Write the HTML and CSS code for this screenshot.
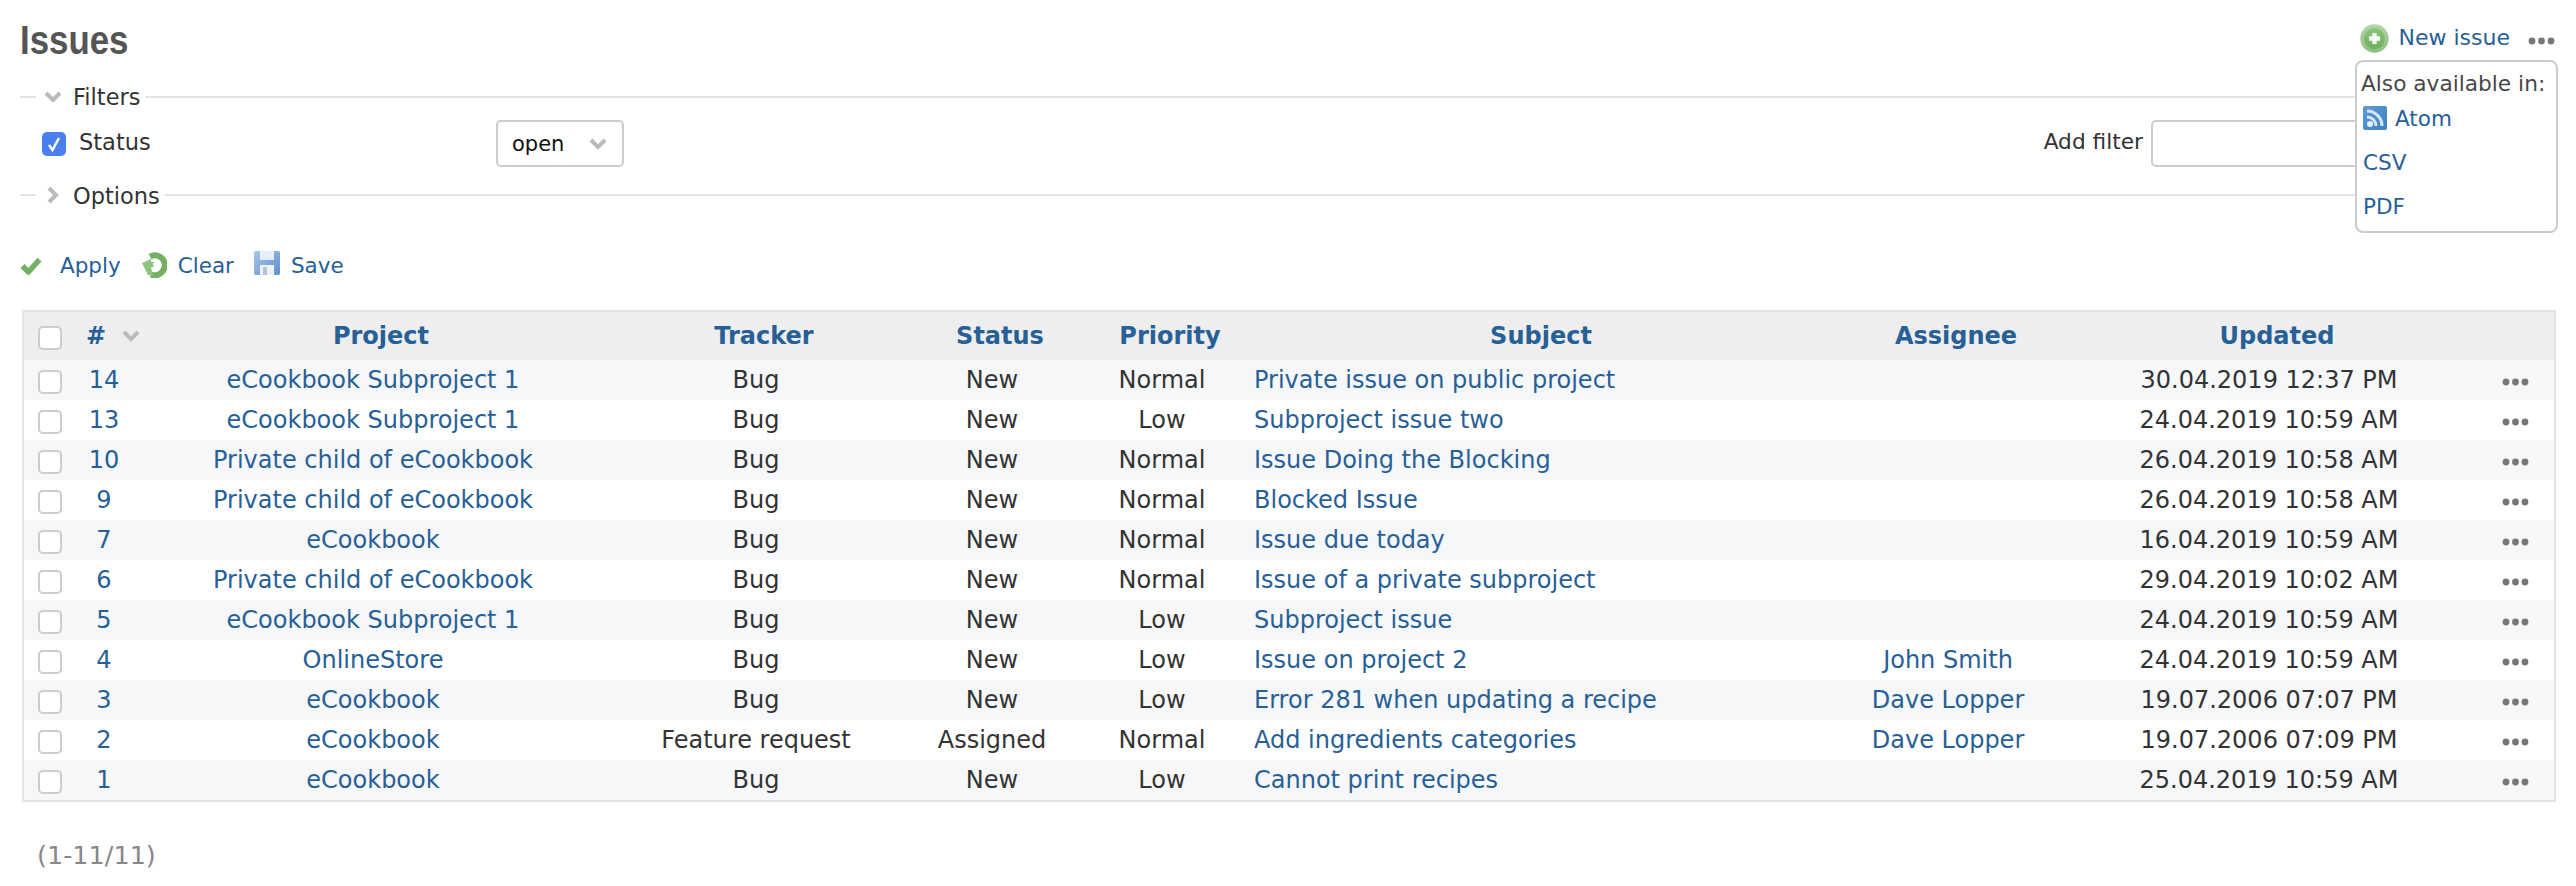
FILE: index.html
```html
<!DOCTYPE html>
<html lang="en">
<head>
<meta charset="utf-8">
<title>Issues</title>
<link rel="stylesheet" href="styles.css">
</head>
<body>
<div class="content">
  <div class="title-row">
    <h2 class="title">Issues</h2>
    <div class="contextual">
      <a class="link new-issue" href="#">
        <svg class="ic-new" viewBox="0 0 29 29"><defs><linearGradient id="gn" x1="0" y1="0" x2="0" y2="1"><stop offset="0" stop-color="#b4d6a8"/><stop offset="1" stop-color="#8dbd7e"/></linearGradient><linearGradient id="gi" x1="0" y1="0" x2="0" y2="1"><stop offset="0" stop-color="#8cc47c"/><stop offset="1" stop-color="#6fae5e"/></linearGradient></defs><circle cx="14.5" cy="14.5" r="14.2" fill="url(#gn)"/><circle cx="14.5" cy="14.5" r="10.5" fill="url(#gi)"/><path d="M14.5 9v11M9 14.5h11" stroke="#f4faf1" stroke-width="4.4"/></svg>
        New issue
      </a>
      <svg class="dots" viewBox="0 0 27 8"><circle cx="4" cy="4" r="3.4"/><circle cx="13.5" cy="4" r="3.4"/><circle cx="23" cy="4" r="3.4"/></svg>
    </div>
  </div>

  <div class="legend">
    <span class="dash"></span>
    <svg class="chev" viewBox="0 0 18 12"><path d="M2 2l7 7 7-7"/></svg>
    <span class="legend-text">Filters</span>
    <span class="rule"></span>
  </div>
  <div class="filter-row">
    <span class="cb-on"><svg viewBox="0 0 24 24"><path d="M7 13l3.5 5L17 6"/></svg></span>
    <span class="status-label">Status</span>
    <div class="select"><span>open</span><svg class="chev" viewBox="0 0 18 12"><path d="M2 2l7 7 7-7"/></svg></div>
    <span class="add-label">Add filter</span>
    <div class="add-input"></div>
  </div>
  <div class="legend options">
    <span class="dash"></span>
    <svg class="chev-right" viewBox="0 0 12 18"><path d="M2 2l7 7-7 7"/></svg>
    <span class="legend-text">Options</span>
    <span class="rule"></span>
  </div>

  <div class="buttons">
    <a class="link btn" href="#"><svg class="ic-apply" viewBox="0 0 22 19"><path d="M2.5 10l6 6L19.5 3.5" fill="none" stroke="#74b064" stroke-width="5.5" stroke-linejoin="round"/></svg>Apply</a>
    <a class="link btn" href="#"><svg class="ic-clear" viewBox="0 0 26 26"><path d="M9 4.5a10 10 0 1 1 1 18" fill="none" stroke="#74b064" stroke-width="6"/><path d="M1 11l9-4v3h6v5h-6l2 9-5-1z" fill="#8ec480"/><circle cx="14.500" cy="12.500" r="2.500" fill="#fff"/></svg>Clear</a>
    <a class="link btn" href="#"><svg class="ic-save" viewBox="0 0 26 24"><defs><linearGradient id="gs" x1="0" y1="0" x2="1" y2="1"><stop offset="0" stop-color="#a8c6e8"/><stop offset="1" stop-color="#5e8fcb"/></linearGradient></defs><rect width="26" height="24" rx="2" fill="url(#gs)"/><rect x="6" y="0" width="14" height="9" fill="#e6eef8"/><rect x="6" y="14" width="14" height="10" fill="#eef0f2"/><rect x="9" y="16" width="4" height="8" fill="#b5c3d3"/></svg>Save</a>
  </div>

  <table class="issues">
    <thead>
      <tr>
        <th class="c-check"><span class="cb"></span></th>
        <th class="c-id"><a class="link" href="#">#</a><svg class="chev sort" viewBox="0 0 18 12"><path d="M2 2l7 7 7-7"/></svg></th>
        <th class="c-project"><a class="link" href="#">Project</a></th>
        <th class="c-tracker"><a class="link" href="#">Tracker</a></th>
        <th class="c-status"><a class="link" href="#">Status</a></th>
        <th class="c-priority"><a class="link" href="#">Priority</a></th>
        <th class="c-subject"><a class="link" href="#">Subject</a></th>
        <th class="c-assignee"><a class="link" href="#">Assignee</a></th>
        <th class="c-updated"><a class="link" href="#">Updated</a></th>
        <th class="c-more"></th>
      </tr>
    </thead>
    <tbody>
      <tr><td><span class="cb"></span></td><td><a class="link" href="#">14</a></td><td><a class="link" href="#">eCookbook Subproject 1</a></td><td>Bug</td><td>New</td><td>Normal</td><td class="subject"><a class="link" href="#">Private issue on public project</a></td><td></td><td>30.04.2019 12:37 PM</td><td><svg class="dots" viewBox="0 0 27 8"><circle cx="4" cy="4" r="3.4"/><circle cx="13.5" cy="4" r="3.4"/><circle cx="23" cy="4" r="3.4"/></svg></td></tr>
      <tr><td><span class="cb"></span></td><td><a class="link" href="#">13</a></td><td><a class="link" href="#">eCookbook Subproject 1</a></td><td>Bug</td><td>New</td><td>Low</td><td class="subject"><a class="link" href="#">Subproject issue two</a></td><td></td><td>24.04.2019 10:59 AM</td><td><svg class="dots" viewBox="0 0 27 8"><circle cx="4" cy="4" r="3.4"/><circle cx="13.5" cy="4" r="3.4"/><circle cx="23" cy="4" r="3.4"/></svg></td></tr>
      <tr><td><span class="cb"></span></td><td><a class="link" href="#">10</a></td><td><a class="link" href="#">Private child of eCookbook</a></td><td>Bug</td><td>New</td><td>Normal</td><td class="subject"><a class="link" href="#">Issue Doing the Blocking</a></td><td></td><td>26.04.2019 10:58 AM</td><td><svg class="dots" viewBox="0 0 27 8"><circle cx="4" cy="4" r="3.4"/><circle cx="13.5" cy="4" r="3.4"/><circle cx="23" cy="4" r="3.4"/></svg></td></tr>
      <tr><td><span class="cb"></span></td><td><a class="link" href="#">9</a></td><td><a class="link" href="#">Private child of eCookbook</a></td><td>Bug</td><td>New</td><td>Normal</td><td class="subject"><a class="link" href="#">Blocked Issue</a></td><td></td><td>26.04.2019 10:58 AM</td><td><svg class="dots" viewBox="0 0 27 8"><circle cx="4" cy="4" r="3.4"/><circle cx="13.5" cy="4" r="3.4"/><circle cx="23" cy="4" r="3.4"/></svg></td></tr>
      <tr><td><span class="cb"></span></td><td><a class="link" href="#">7</a></td><td><a class="link" href="#">eCookbook</a></td><td>Bug</td><td>New</td><td>Normal</td><td class="subject"><a class="link" href="#">Issue due today</a></td><td></td><td>16.04.2019 10:59 AM</td><td><svg class="dots" viewBox="0 0 27 8"><circle cx="4" cy="4" r="3.4"/><circle cx="13.5" cy="4" r="3.4"/><circle cx="23" cy="4" r="3.4"/></svg></td></tr>
      <tr><td><span class="cb"></span></td><td><a class="link" href="#">6</a></td><td><a class="link" href="#">Private child of eCookbook</a></td><td>Bug</td><td>New</td><td>Normal</td><td class="subject"><a class="link" href="#">Issue of a private subproject</a></td><td></td><td>29.04.2019 10:02 AM</td><td><svg class="dots" viewBox="0 0 27 8"><circle cx="4" cy="4" r="3.4"/><circle cx="13.5" cy="4" r="3.4"/><circle cx="23" cy="4" r="3.4"/></svg></td></tr>
      <tr><td><span class="cb"></span></td><td><a class="link" href="#">5</a></td><td><a class="link" href="#">eCookbook Subproject 1</a></td><td>Bug</td><td>New</td><td>Low</td><td class="subject"><a class="link" href="#">Subproject issue</a></td><td></td><td>24.04.2019 10:59 AM</td><td><svg class="dots" viewBox="0 0 27 8"><circle cx="4" cy="4" r="3.4"/><circle cx="13.5" cy="4" r="3.4"/><circle cx="23" cy="4" r="3.4"/></svg></td></tr>
      <tr><td><span class="cb"></span></td><td><a class="link" href="#">4</a></td><td><a class="link" href="#">OnlineStore</a></td><td>Bug</td><td>New</td><td>Low</td><td class="subject"><a class="link" href="#">Issue on project 2</a></td><td><a class="link" href="#">John Smith</a></td><td>24.04.2019 10:59 AM</td><td><svg class="dots" viewBox="0 0 27 8"><circle cx="4" cy="4" r="3.4"/><circle cx="13.5" cy="4" r="3.4"/><circle cx="23" cy="4" r="3.4"/></svg></td></tr>
      <tr><td><span class="cb"></span></td><td><a class="link" href="#">3</a></td><td><a class="link" href="#">eCookbook</a></td><td>Bug</td><td>New</td><td>Low</td><td class="subject"><a class="link" href="#">Error 281 when updating a recipe</a></td><td><a class="link" href="#">Dave Lopper</a></td><td>19.07.2006 07:07 PM</td><td><svg class="dots" viewBox="0 0 27 8"><circle cx="4" cy="4" r="3.4"/><circle cx="13.5" cy="4" r="3.4"/><circle cx="23" cy="4" r="3.4"/></svg></td></tr>
      <tr><td><span class="cb"></span></td><td><a class="link" href="#">2</a></td><td><a class="link" href="#">eCookbook</a></td><td>Feature request</td><td>Assigned</td><td>Normal</td><td class="subject"><a class="link" href="#">Add ingredients categories</a></td><td><a class="link" href="#">Dave Lopper</a></td><td>19.07.2006 07:09 PM</td><td><svg class="dots" viewBox="0 0 27 8"><circle cx="4" cy="4" r="3.4"/><circle cx="13.5" cy="4" r="3.4"/><circle cx="23" cy="4" r="3.4"/></svg></td></tr>
      <tr><td><span class="cb"></span></td><td><a class="link" href="#">1</a></td><td><a class="link" href="#">eCookbook</a></td><td>Bug</td><td>New</td><td>Low</td><td class="subject"><a class="link" href="#">Cannot print recipes</a></td><td></td><td>25.04.2019 10:59 AM</td><td><svg class="dots" viewBox="0 0 27 8"><circle cx="4" cy="4" r="3.4"/><circle cx="13.5" cy="4" r="3.4"/><circle cx="23" cy="4" r="3.4"/></svg></td></tr>
    </tbody>
  </table>

  <p class="pagination">(1-11/11)</p>

  <div class="formats">
    <p class="formats-title">Also available in:</p>
    <a class="link fmt" href="#"><svg class="ic-rss" viewBox="0 0 24 24"><defs><linearGradient id="gr" x1="0" y1="0" x2="1" y2="1"><stop offset="0" stop-color="#5c9bd6"/><stop offset="1" stop-color="#3f7fbf"/></linearGradient></defs><rect width="24" height="24" rx="2" fill="url(#gr)"/><circle cx="7" cy="18" r="3" fill="#e4eff9"/><path d="M4 11a9 9 0 0 1 9 9M4 5a15 15 0 0 1 15 15" fill="none" stroke="#d6e6f5" stroke-width="3"/></svg>Atom</a>
    <a class="link fmt" href="#">CSV</a>
    <a class="link fmt" href="#">PDF</a>
  </div>
</div>
</body>
</html>
```
FILE: styles.css
```css
* { box-sizing: border-box; }
html, body { margin: 0; background: #fff; }
body {
  font-family: "DejaVu Sans", Verdana, sans-serif;
  font-size: 24px;
  color: #333;
}
.content { position: relative; padding: 0 18px 0 20px; height: 886px; overflow: hidden; }
.link { color: #276096; text-decoration: none; }

.title-row { display: flex; justify-content: space-between; height: 82px; }
.title {
  margin: 16px 0 0;
  font-family: "Liberation Sans", sans-serif;
  font-size: 41px;
  line-height: 48px;
  font-weight: 700;
  color: #555;
  transform: scaleX(0.85);
  transform-origin: left center;
}
.contextual { display: flex; align-items: flex-start; padding-top: 24px; margin-right: 3px; }
.new-issue { display: flex; align-items: center; gap: 10px; height: 28px; line-height: 28px; font-size: 22px; }
.ic-new { width: 29px; height: 29px; }
.dots { width: 27px; height: 8px; fill: #777; display: block; }
.contextual .dots { margin: 13px 0 0 18px; }

.legend { display: flex; align-items: center; height: 30px; }
.legend-text { margin-left: 11px; margin-right: 5px; font-size: 22.5px; color: #333; }
.options .legend-text { padding-top: 2px; }
.dash { width: 16px; height: 2px; background: #e4e4e4; }
.legend .chev { margin-left: 8px; width: 18px; height: 12px; }
.chev { width: 18px; height: 12px; fill: none; stroke: #bbb; stroke-width: 4; }
.chev-right { width: 12px; height: 18px; margin-left: 11px; margin-right: 3px; fill: none; stroke: #bbb; stroke-width: 4; }
.rule { flex: 1; height: 2px; background: #e4e4e4; }

.filter-row { display: flex; align-items: flex-start; height: 68px; padding-top: 8px; }
.cb-on { width: 24px; height: 24px; margin: 12px 0 0 22px; background: #4a80ee; border-radius: 5px; display: block; }
.cb-on svg { display: block; width: 24px; height: 24px; fill: none; stroke: #fff; stroke-width: 2.5; }
.status-label { margin: 8px 0 0 13px; width: 417px; line-height: 28px; font-size: 22.5px; }
.select {
  display: flex; align-items: center; justify-content: space-between;
  width: 128px; height: 47px; padding: 0 15px 0 14px;
  border: 2px solid #ccc; border-radius: 5px; color: #111; font-size: 21px;
}
.add-label { margin: 8px 8px 0 auto; line-height: 28px; font-size: 21.7px; }
.add-input { width: 407px; height: 47px; border: 2px solid #ccc; border-radius: 5px; }

.buttons { display: flex; gap: 20px; height: 100px; padding-top: 37px; align-items: flex-start; }
.btn { display: flex; align-items: center; height: 36px; gap: 11px; font-size: 21.5px; }
.ic-apply { width: 22px; height: 19px; margin-right: 7px; }
.ic-clear { width: 26px; height: 26px; }
.ic-save { width: 26px; height: 24px; margin-top: -4px; }

.issues {
  width: 2534px; margin-left: 2px; table-layout: fixed;
  border-collapse: separate; border-spacing: 0;
  border: 2px solid #e4e4e4;
}
.issues th { height: 48px; background: #eee; font-weight: 700; padding: 0 0 0 16px; text-align: center; font-size: 24px; white-space: nowrap; }
.issues td { height: 40px; padding: 0; text-align: center; white-space: nowrap; font-size: 24px; }
.issues tbody tr:nth-child(odd) td { background: #f6f7f9; }
.issues td.subject { text-align: left; padding-left: 12px; }
.issues th.c-check { padding: 0; }
.issues th.c-id { text-align: left; padding-left: 14px; }
.issues th.c-subject { padding-left: 2px; }
.c-check { width: 48px; }
.c-id { width: 64px; }
.c-project { width: 474px; }
.c-tracker { width: 292px; }
.c-status { width: 180px; }
.c-priority { width: 160px; }
.c-subject { width: 596px; }
.c-assignee { width: 220px; }
.c-updated { width: 422px; }
.c-more { width: 74px; }
.sort { margin-left: 16px; vertical-align: 2px; }
.cb { display: block; width: 24px; height: 24px; margin: 4px 0 0 14px; border: 2px solid #ccc; border-radius: 5px; background: #fff; }
.issues td .dots { margin: 4px 0 0 22px; }

.pagination { margin: 39px 0 0 17px; color: #888; line-height: 28px; font-size: 25.5px; }

.formats {
  position: absolute; left: 2355px; top: 60px; width: 203px; height: 173px;
  padding: 8px 4px 0 4px; background: #fff;
  border: 2px solid #ccc; border-radius: 8px;
}
.formats-title { margin: 0; line-height: 28px; color: #484848; font-size: 21.7px; white-space: nowrap; }
.fmt { display: flex; align-items: center; gap: 8px; height: 28px; margin: 16px 0 0 2px; font-size: 21.5px; }
.formats-title + .fmt { margin-top: 6px; }
.ic-rss { width: 24px; height: 24px; }
```
